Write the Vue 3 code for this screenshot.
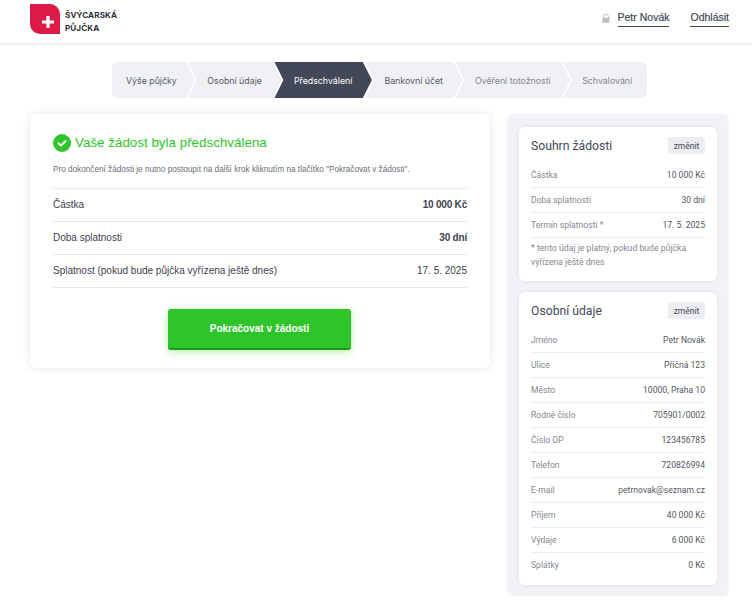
<script setup>
const steps = [
  { label: 'Výše půjčky', state: 'done' },
  { label: 'Osobní údaje', state: 'done' },
  { label: 'Předschválení', state: 'active' },
  { label: 'Bankovní účet', state: 'done' },
  { label: 'Ověření totožnosti', state: 'todo' },
  { label: 'Schvalování', state: 'todo' },
]
const mainRows = [
  { k: 'Částka', v: '10 000 Kč', bold: true },
  { k: 'Doba splatnosti', v: '30 dní', bold: true },
  { k: 'Splatnost (pokud bude půjčka vyřízena ještě dnes)', v: '17. 5. 2025', bold: false },
]
const summary = [
  ['Částka', '10 000 Kč'],
  ['Doba splatnosti', '30 dní'],
  ['Termín splatnosti *', '17. 5. 2025'],
]
const personal = [
  ['Jméno', 'Petr Novák'],
  ['Ulice', 'Příčná 123'],
  ['Město', '10000, Praha 10'],
  ['Rodné číslo', '705901/0002'],
  ['Číslo OP', '123456785'],
  ['Telefon', '720826994'],
  ['E-mail', 'petrnovak@seznam.cz'],
  ['Příjem', '40 000 Kč'],
  ['Výdaje', '6 000 Kč'],
  ['Splátky', '0 Kč'],
]
</script>

<template>
  <div class="page">
    <header class="header">
      <div class="brand">
        <div class="logo">
          <svg width="12" height="12" viewBox="0 0 12 12"><path d="M4.4 0h3.2v4.4H12v3.2H7.6V12H4.4V7.6H0V4.4h4.4z" fill="#fff" /></svg>
        </div>
        <div class="brand-name">ŠVÝCARSKÁ<br />PŮJČKA</div>
      </div>
      <nav class="user">
        <svg class="lock" width="8" height="9" viewBox="0 0 8 9">
          <path d="M1.6 4V2.6a2.4 2.4 0 0 1 4.8 0V4" fill="none" stroke="#bdbdc2" stroke-width="1" />
          <rect x="0.5" y="3.8" width="7" height="5" rx="0.6" fill="#bdbdc2" />
        </svg>
        <a class="user-link">Petr Novák</a>
        <a class="user-link">Odhlásit</a>
      </nav>
    </header>

    <ol class="steps">
      <li v-for="s in steps" :key="s.label" class="step" :class="s.state">{{ s.label }}</li>
    </ol>

    <div class="content">
      <main class="card">
        <h1 class="title">
          <svg width="18" height="18" viewBox="0 0 18 18">
            <circle cx="9" cy="9" r="9" fill="#2ec52a" />
            <path d="M5.4 9.2l2.5 2.4 4.7-4.6" fill="none" stroke="#fff" stroke-width="2" stroke-linecap="round" stroke-linejoin="round" />
          </svg>
          <span class="title-text">Vaše žádost byla předschválena</span>
        </h1>
        <p class="intro">Pro dokončení žádosti je nutno postoupit na další krok kliknutím na tlačítko "Pokračovat v žádosti".</p>
        <div class="rows">
          <div v-for="r in mainRows" :key="r.k" class="row">
            <span>{{ r.k }}</span>
            <span :class="{ strong: r.bold }">{{ r.v }}</span>
          </div>
        </div>
        <div class="cta-wrap"><button class="cta">Pokračovat v žádosti</button></div>
      </main>

      <aside class="side">
        <section class="box">
          <div class="box-head">
            <h2>Souhrn žádosti</h2>
            <button class="change">změnit</button>
          </div>
          <div v-for="r in summary" :key="r[0]" class="srow"><span>{{ r[0] }}</span><span class="val">{{ r[1] }}</span></div>
          <p class="note">* tento údaj je platný, pokud bude půjčka vyřízena ještě dnes</p>
        </section>
        <section class="box box-last">
          <div class="box-head">
            <h2>Osobní údaje</h2>
            <button class="change">změnit</button>
          </div>
          <div v-for="r in personal" :key="r[0]" class="srow"><span>{{ r[0] }}</span><span class="val">{{ r[1] }}</span></div>
        </section>
      </aside>
    </div>
  </div>
</template>

<style>
html, body { margin: 0; background: #fff; }
</style>

<style scoped>
.page { font-family: "Liberation Sans", Arial, sans-serif; color: #434859; padding-bottom: 14px; }

.header {
  height: 43px; border-bottom: 1px solid #e9eaee; padding: 0 23px 0 30px;
  display: flex; justify-content: space-between; align-items: flex-start;
  box-shadow: 0 1px 1px #f3f3f5;
}
.brand { display: flex; align-items: flex-start; margin-top: 4px; }
.logo {
  width: 30px; height: 30px; background: #dc1a47; border-radius: 0 10px 0 10px;
  display: flex; align-items: center; justify-content: center; padding: 6px 0 0 6px; box-sizing: border-box;
}
.brand-name {
  margin: 5px 0 0 5px; font-family: Inter, sans-serif; font-weight: 700; font-size: 8.1px; line-height: 13px;
  color: #2c2f38; letter-spacing: 0.1px;
}
.user { display: flex; align-items: center; margin-top: 11px; font-size: 10.5px; }
.lock { margin-right: 8px; margin-top: -2px; }
.user-link { color: #434859; padding-bottom: 2px; border-bottom: 1px solid #434859; line-height: 13px; -webkit-text-stroke: 0.2px #434859; }
.user-link + .user-link { margin-left: 21px; }

.steps {
  list-style: none; margin: 18px 0 0 112px; padding: 0; display: flex; height: 36px;
  font-family: Inter, sans-serif; font-size: 8.8px;
}
.step {
  display: flex; align-items: center; padding: 0 19.5px; margin-right: -7px; background: #f0f1f5; color: #555a68; white-space: nowrap;
  clip-path: polygon(0 0, calc(100% - 9px) 0, 100% 50%, calc(100% - 9px) 100%, 0 100%, 9px 50%);
}
.step:first-child {
  padding-left: 14px; padding-right: 18px; border-radius: 6px 0 0 6px;
  clip-path: polygon(0 0, calc(100% - 9px) 0, 100% 50%, calc(100% - 9px) 100%, 0 100%);
}
.step:last-child {
  padding-left: 19px; padding-right: 15px; margin-right: 0; border-radius: 0 6px 6px 0;
  clip-path: polygon(0 0, 100% 0, 100% 100%, 0 100%, 9px 50%);
}
.step.active { background: #434859; color: #fff; }
.step.todo { color: #83868f; }

.content { display: flex; align-items: flex-start; gap: 17px; margin: 16px 23px 0 30px; }

.card {
  width: 460px; box-sizing: border-box; height: 254px; padding: 20px 23px 0; background: #fff; border-radius: 6px;
  box-shadow: 0 0 8px rgba(60, 65, 90, 0.13);
}
.title {
  margin: 0; display: flex; align-items: center; gap: 4px; height: 18px; font-size: 13.4px; font-weight: 400; color: #2ec52a; white-space: nowrap;
}
.title-text { margin-top: -2px; }
.intro { margin: 12px 0 0; font-size: 8.2px; line-height: 12px; color: #6b6e78; white-space: nowrap; }
.rows { margin-top: 12px; border-top: 1px solid #e6e7ea; }
.row {
  height: 33px; padding-bottom: 1px; box-sizing: border-box; border-bottom: 1px solid #e6e7ea; display: flex; justify-content: space-between; align-items: center;
  font-size: 10px; color: #3d414f;
}
.strong { font-weight: 700; letter-spacing: -0.2px; }
.cta-wrap { margin: 21px 0 0 115px; }
.cta {
  display: block; width: 183px; height: 41px; border: 0; border-bottom: 2px solid #1c9a18; border-radius: 3px; background: #2ec52a; color: #fff;
  font: 700 10px "Liberation Sans", Arial, sans-serif; box-shadow: 0 2px 8px rgba(46, 197, 42, 0.35);
}

.side { width: 222px; box-sizing: border-box; background: #f2f3f7; border-radius: 6px; padding: 13px 12px 11px; display: flex; flex-direction: column; gap: 11px; }
.box { background: #fff; border-radius: 6px; padding: 10px 12px 12px; box-shadow: 0 0 4px rgba(60, 65, 90, 0.1); }
.box-last { padding-bottom: 8px; }
.box-head { display: flex; justify-content: space-between; align-items: center; height: 17px; margin-bottom: 9px; }
.box-head h2 { margin: 0; font-family: Roboto, sans-serif; font-weight: 400; font-size: 12.2px; color: #434859; }
.change {
  width: 37px; height: 17px; padding: 0; border: 0; border-radius: 3px; background: #ecedf1; color: #434859;
  font: 8.5px Roboto, sans-serif;
}
.srow {
  height: 24px; border-bottom: 1px solid #ecedf0; display: flex; justify-content: space-between; align-items: center;
  font-family: Roboto, sans-serif; font-size: 8.6px; color: #85888f;
}
.srow:last-child { border-bottom: 0; }
.val { color: #53565f; }
.note { margin: 3px 0 0; font-family: Roboto, sans-serif; font-size: 8.7px; line-height: 14px; color: #85888f; }
</style>
